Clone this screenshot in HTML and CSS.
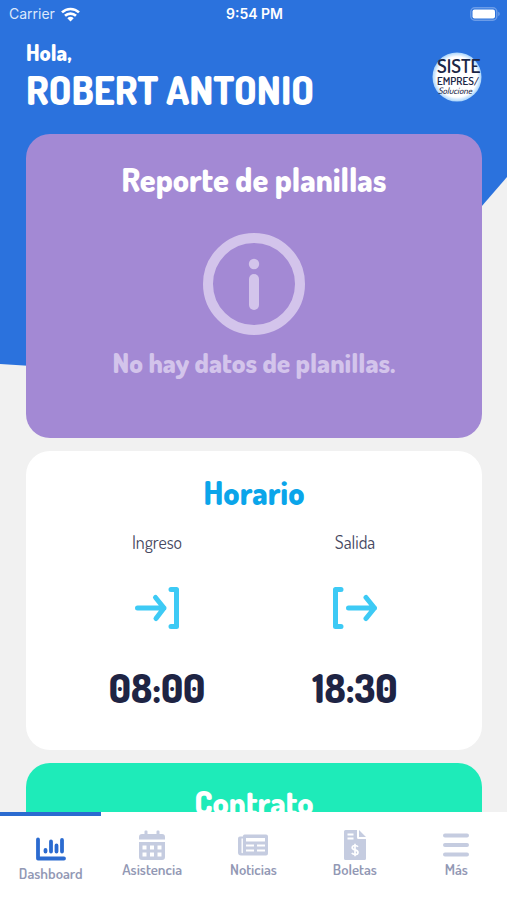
FILE: index.html
```html
<!DOCTYPE html>
<html lang="es">
<head>
<meta charset="utf-8">
<meta name="viewport" content="width=device-width, initial-scale=1">
<title>Dashboard</title>
<link rel="stylesheet" href="styles.css">
</head>
<body>
<div class="status">
  <div class="carrier">Carrier
    <svg width="19" height="15" viewBox="0 0 19 15" fill="none" stroke="#fff" stroke-width="2.6" aria-hidden="true"><path d="M1 5.4a12.2 12.2 0 0 1 17 0M4 8.8a8 8 0 0 1 11 0"/><path d="M6.3 11.3a4.8 4.8 0 0 1 6.4 0L9.5 14.5z" fill="#fff" stroke="none"/></svg>
  </div>
  <div class="clock">9:54 PM</div>
  <svg class="battery" width="30" height="14" viewBox="0 0 30 14" aria-hidden="true"><rect x=".8" y=".8" width="26" height="12.4" rx="4" fill="none" stroke="#6b9ce8" stroke-width="1.4"/><rect x="2.5" y="2.5" width="22.5" height="9" rx="2" fill="#fff"/><path d="M28.2 4.8q1.6.6 1.6 2.2t-1.6 2.2z" fill="#6b9ce8"/></svg>
</div>
<header class="header">
  <div>
    <p class="hello">Hola,</p>
    <h1 class="name">ROBERT ANTONIO</h1>
  </div>
  <svg class="avatar" width="50" height="50" viewBox="0 0 50 50" role="img" aria-label="Empresa">
    <defs>
      <radialGradient id="rim"><stop offset=".82" stop-color="#fff"/><stop offset="1" stop-color="#a9d4fb"/></radialGradient>
    </defs>
    <circle cx="25" cy="25" r="24.5" fill="url(#rim)"/>
    <g fill="#1b2747">
      <text class="logo-a" x="5" y="21">SISTE</text>
      <text class="logo-b" x="5" y="33">EMPRES/</text>
      <text class="logo-c" x="6" y="42">Solucione</text>
    </g>
  </svg>
</header>
<main class="cards">
  <section class="card report">
    <h2>Reporte de planillas</h2>
    <div class="empty">
      <svg width="102" height="102" viewBox="0 0 102 102" aria-hidden="true"><circle cx="51" cy="51" r="46" fill="none" stroke="currentColor" stroke-width="10"/><circle cx="51" cy="31" r="5.2" fill="currentColor"/><path d="M51 46v26" stroke="currentColor" stroke-width="10" stroke-linecap="round"/></svg>
      <p>No hay datos de planillas.</p>
    </div>
  </section>
  <section class="card schedule">
    <h2>Horario</h2>
    <div class="times">
      <div class="time">
        <span class="label">Ingreso</span>
        <svg width="44" height="42" viewBox="0 0 44 42" aria-hidden="true"><path d="M2.5 21H29M20.500 10.500 29 21l-8 10.500M36 2.500h5.500v37H36"/></svg>
        <strong>08:00</strong>
      </div>
      <div class="time">
        <span class="label">Salida</span>
        <svg width="44" height="42" viewBox="0 0 44 42" aria-hidden="true"><path d="M15.500 21h26M33 10.500 41.500 21l-8.500 10.500M8 2.500H2.500v37H8"/></svg>
        <strong>18:30</strong>
      </div>
    </div>
  </section>
  <section class="card contract">
    <h2>Contrato</h2>
  </section>
</main>
<nav class="tabs">
  <a class="tab active" href="#dashboard" aria-current="page">
    <svg width="30" height="23" viewBox="0 0 30 23" fill="none" stroke="currentColor" stroke-linecap="round" aria-hidden="true"><path d="M2 2v19h26" stroke-width="3.800" stroke-linejoin="round"/><path d="M9.500 12.500v1.500M15 4v10M20.500 8v6M26 2.500v11.500" stroke-width="3.800"/></svg>
    <span>Dashboard</span>
  </a>
  <a class="tab" href="#asistencia">
    <svg width="26" height="30" viewBox="0 0 26 30" aria-hidden="true"><path fill="currentColor" fill-rule="evenodd" d="M5.500 1.500q0-1 1-1h1q1 0 1 1V4h9V1.500q0-1 1-1h1q1 0 1 1V4H23q3 0 3 3v2.500H0V7q0-3 3-3h2.500zM0 12h26v15q0 3-3 3H3q-3 0-3-3zM3.500 15.500v4h4v-4zM11 15.500v4h4v-4zM18.500 15.500v4h4v-4zM3.500 22.500v4h4v-4zM11 22.500v4h4v-4zM18.500 22.500v4h4v-4z"/></svg>
    <span>Asistencia</span>
  </a>
  <a class="tab" href="#noticias">
    <svg width="30" height="21" viewBox="0 0 30 21" aria-hidden="true"><path fill="currentColor" fill-rule="evenodd" d="M6.500 0H28q2 0 2 2v17q0 2-2 2H3q-3 0-3-3V4q0-2 2-2h3V1.500Q5 0 6.500 0zM3.500 4V18q0 .8.700.8t.7-.8V4zM8 3.500V7h19V3.500zM8 10v2h8v-2zM19 10v2h8v-2zM8 15v2h8v-2zM19 15v2h8v-2z"/></svg>
    <span>Noticias</span>
  </a>
  <a class="tab" href="#boletas">
    <svg width="22" height="30" viewBox="0 0 22 30" aria-hidden="true"><path fill="currentColor" d="M1.500 0H13v7.500Q13 9 14.500 9H22v19.500q0 1.500-1.500 1.500h-19Q0 30 0 28.500v-27Q0 0 1.500 0zM15 0l7 7h-7z"/><path d="M3.500 4.500h6M3.500 8.500h6" stroke="#fff" stroke-width="1.800"/><path d="M14 16.800q-1-1.300-3-1.300-2.800 0-2.800 2.200 0 1.500 2.800 2.100 3 .7 3 2.600 0 2.100-3 2.100-2.200 0-3.200-1.400M11 13.800v12.400" fill="none" stroke="#fff" stroke-width="1.700"/></svg>
    <span>Boletas</span>
  </a>
  <a class="tab" href="#mas">
    <svg width="26" height="23" viewBox="0 0 26 23" aria-hidden="true"><path d="M2 2h22M2 11.500h22M2 21h22" stroke="currentColor" stroke-width="4" stroke-linecap="round"/></svg>
    <span>Más</span>
  </a>
</nav>
</body>
</html>
```
FILE: styles.css
```css
* { box-sizing: border-box; }

body {
  margin: 0;
  height: 100vh;
  display: flex;
  flex-direction: column;
  position: relative;
  overflow: hidden;
  background: #f1f1f1;
  color: #1e2444;
  font-family: Dosis, "Liberation Sans Narrow", "Roboto Condensed", Roboto, sans-serif;
}

/* Slanted blue backdrop behind the header and first card */
body::before {
  content: "";
  position: absolute;
  z-index: -1;
  inset: 0 0 auto;
  height: 380px;
  background: #2b72dd;
  clip-path: polygon(0 0, 100% 0, 100% 177px, 85% 265px, 50% 380px, 0 364px);
}

h1, h2, p { margin: 0; }

.status {
  display: grid;
  grid-template-columns: 1fr auto 1fr;
  align-items: center;
  height: 28px;
  padding: 0 7px 0 9px;
  color: #fff;
  font: 14px/20px Inter, sans-serif;
}

.carrier { display: flex; align-items: center; gap: 6px; color: #dce8fb; }
.clock { font-weight: 600; }
.battery { justify-self: end; }

.header {
  display: flex;
  justify-content: space-between;
  align-items: center;
  padding: 12px 25px 20px 26px;
  color: #fff;
}

.hello { font-size: 22px; font-weight: 800; line-height: 24px; }
.name { font-size: 39px; font-weight: 800; line-height: 48px; padding-top: 2px; white-space: nowrap; }

.logo-a { font-size: 19px; font-weight: 600; }
.logo-b { font-size: 11px; font-weight: 600; }
.logo-c { font-size: 9px; font-weight: 500; font-style: italic; }

.cards {
  flex: 1;
  min-height: 0;
  overflow-y: auto;
  scrollbar-width: none;
  display: flex;
  flex-direction: column;
  gap: 13px;
  padding: 0 25px 0 26px;
}

.card {
  flex: none;
  border-radius: 24px;
  padding: 24px;
  text-align: center;
}

.card h2 { font-size: 32px; font-weight: 800; line-height: 40px; }

.report { background: #a389d4; color: #fff; min-height: 304px; padding-top: 26px; }
.empty { color: #d3c4eb; padding-top: 33px; }
.empty svg { display: block; margin: 0 auto; }
.empty p { font-size: 27px; font-weight: 800; line-height: 34px; padding-top: 10px; }

.schedule { background: #fff; min-height: 299px; padding-top: 22px; }
.schedule h2 { color: #0aa5ea; }
.times { display: grid; grid-template-columns: 1fr 1fr; padding: 16px 4px 0 8px; }
.time { display: flex; flex-direction: column; align-items: center; }
.label { font-size: 18px; line-height: 26px; color: #46485f; }
.time svg {
  margin: 32px 0 36px;
  fill: none;
  stroke: #3dcaf5;
  stroke-width: 5px;
  stroke-linecap: round;
  stroke-linejoin: round;
}
.time strong {
  font-size: 39px;
  font-weight: 800;
  line-height: 46px;
}

.contract { background: #1eebb9; color: #fff; min-height: 300px; padding-top: 20px; }

.tabs {
  flex: none;
  display: grid;
  grid-template-columns: repeat(5, 1fr);
  height: 88px;
  background: #fff;
}

.tab {
  display: flex;
  flex-direction: column;
  align-items: center;
  padding-top: 18px;
  color: #c5cce0;
  text-decoration: none;
}

.tab svg { height: 30px; }
.tab span { font-size: 15px; font-weight: 600; line-height: 20px; color: #9298b4; }
.active { border-top: 4px solid #2b6bd0; color: #2b6bd0; }
```
